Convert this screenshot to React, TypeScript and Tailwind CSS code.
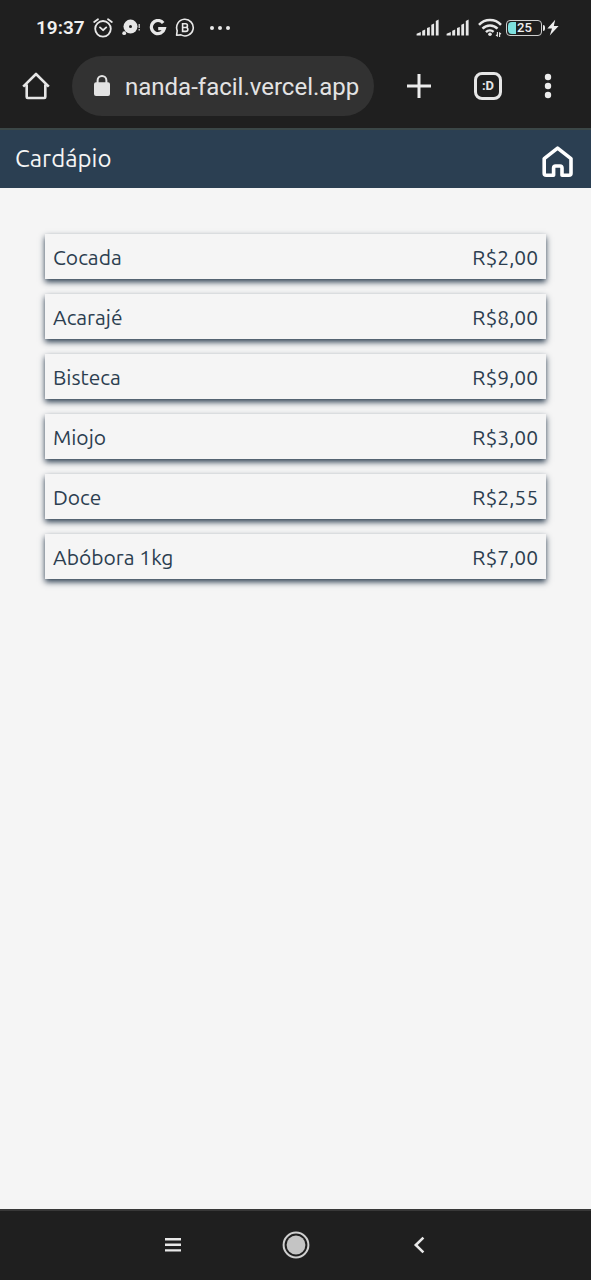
import React from "react";

const items = [
  { name: "Cocada", price: "R$2,00" },
  { name: "Acarajé", price: "R$8,00" },
  { name: "Bisteca", price: "R$9,00" },
  { name: "Miojo", price: "R$3,00" },
  { name: "Doce", price: "R$2,55" },
  { name: "Abóbora 1kg", price: "R$7,00" },
];

function AlarmIcon() {
  return (
    <svg width="20" height="20" viewBox="0 0 20 20" fill="none" stroke="#e8e8e8" strokeWidth="1.8" strokeLinecap="round" strokeLinejoin="round" aria-hidden="true">
      <circle cx="10" cy="10.8" r="7.8" />
      <path d="M1.2 4 5 1.2M18.8 4 15 1.2M7 9.4l3 2.8 3.2-2.8" />
    </svg>
  );
}

function RecordIcon() {
  return (
    <svg width="20" height="20" viewBox="0 0 20 20" fill="#e8e8e8" aria-hidden="true">
      <circle cx="9.5" cy="8.6" r="7" />
      <circle cx="9.5" cy="8.6" r="1.5" fill="#1f1f1f" />
      <circle cx="3.2" cy="15.2" r="1.9" />
      <path d="M17.6 6h1.2v4h-1.2zM17.6 11h1.2v1.4h-1.2z" />
    </svg>
  );
}

function GoogleIcon() {
  return (
    <svg width="18" height="18" viewBox="0 0 18 18" fill="none" stroke="#e8e8e8" strokeWidth="3.2" aria-hidden="true">
      <path d="M14.2 4A6.6 6.6 0 1 0 15.4 9.6H9.2" />
    </svg>
  );
}

function BusinessIcon() {
  return (
    <svg width="20" height="20" viewBox="0 0 20 20" fill="none" stroke="#e8e8e8" aria-hidden="true">
      <path d="M2.2 12.6A8.3 8.3 0 1 1 6 16.9L1.6 17.2Z" strokeWidth="1.6" strokeLinejoin="round" />
      <path d="M7.6 5.8h3a1.8 1.8 0 0 1 0 3.7h-3Zm0 3.7h3.3a1.9 1.9 0 0 1 0 3.9H7.6Z" strokeWidth="1.6" />
    </svg>
  );
}

function SignalIcon() {
  return (
    <svg width="24" height="18" viewBox="0 0 24 18" fill="#e8e8e8" aria-hidden="true">
      <path d="M.6 14.7 4.8 13v3.4H.6zM6.2 11.8l3-1.2v5.8h-3zM11 9l2.8-1.1v8.5H11zM15.3 5.8l2.8-1.2v11.8h-2.8zM19.8 2l2.8-1.4v15.8h-2.8z" />
    </svg>
  );
}

function WifiIcon() {
  return (
    <svg width="24" height="20" viewBox="0 0 24 20" fill="none" stroke="#e8e8e8" strokeWidth="2.5" aria-hidden="true">
      <path d="M1 6.8a15 15 0 0 1 22 0M4.5 10.7a10.3 10.3 0 0 1 15 0M8 14.1a5.6 5.6 0 0 1 7.6-.2" />
      <circle cx="12" cy="16.2" r="1.8" fill="#e8e8e8" stroke="none" />
      <path d="M19.4 14v4l-1.4-1M21.6 19v-4l1.4 1" strokeWidth="1.1" />
    </svg>
  );
}

function BoltIcon() {
  return (
    <svg width="12" height="18" viewBox="0 0 12 18" fill="#f0f0f0" aria-hidden="true">
      <path d="M8.2.8.4 9.4H5L2.8 16.6 11.6 7H6.8Z" />
    </svg>
  );
}

function StatusBar() {
  return (
    <div className="flex h-14 items-center justify-between pr-8 pb-px pl-9 text-[#f0f0f0]">
      <div className="flex items-center gap-2">
        <span className="text-[19px] leading-6 font-semibold">19:37</span>
        <AlarmIcon />
        <RecordIcon />
        <GoogleIcon />
        <BusinessIcon />
        <svg className="ml-1.5" width="22" height="6" viewBox="0 0 22 6" fill="#e8e8e8" aria-hidden="true">
          <circle cx="3" cy="3" r="2" />
          <circle cx="11" cy="3" r="2" />
          <circle cx="19" cy="3" r="2" />
        </svg>
      </div>
      <div className="flex items-center">
        <div className="mr-2 flex gap-1.5">
          <SignalIcon />
          <SignalIcon />
        </div>
        <WifiIcon />
        <div className="ml-1 flex h-4 w-9 items-center rounded border border-[#cfcfcf] bg-[#1f1f1f]">
          <span className="ml-px h-3 w-2 rounded-l-sm bg-[#7ee0df]" />
          <span className="ml-px text-[13px] leading-3 font-medium">25</span>
        </div>
        <span className="mr-0.5 ml-px h-1.5 w-0.5 rounded-r-sm bg-[#e8e8e8]" />
        <BoltIcon />
      </div>
    </div>
  );
}

function BrowserBar() {
  return (
    <div className="flex items-center pr-[7px] pb-3">
      <button type="button" aria-label="Página inicial" className="flex h-[60px] w-[72px] items-center justify-center">
        <svg width="28" height="28" viewBox="0 0 28 28" fill="none" stroke="#e6e6e6" strokeWidth="2.6" strokeLinejoin="round" aria-hidden="true">
          <path d="M1.2 14.6 14 2l12.8 12.6M4.7 12.6V25a1 1 0 0 0 1 1H22.3a1 1 0 0 0 1-1V12.6" />
        </svg>
      </button>
      <div className="flex h-[60px] min-w-0 flex-1 items-center rounded-full bg-[#323232] pr-3 pl-5">
        <svg className="shrink-0" width="20" height="24" viewBox="0 0 20 24" aria-hidden="true">
          <path d="M5.6 9V6.4a4.4 4.4 0 0 1 8.8 0V9" fill="none" stroke="#e3e3e3" strokeWidth="2" />
          <rect x="2" y="8.2" width="16" height="13.8" rx="2" fill="#e3e3e3" />
        </svg>
        <input
          type="text"
          readOnly
          aria-label="Endereço"
          value="nanda-facil.vercel.app"
          className="ml-[13px] min-w-0 flex-1 bg-transparent pt-0.5 text-[24px] leading-8 text-[#e3e3e3] outline-none"
        />
      </div>
      <button type="button" aria-label="Nova guia" className="flex h-[60px] w-[90px] items-center justify-center">
        <svg width="24" height="24" viewBox="0 0 24 24" stroke="#ececec" strokeWidth="3" aria-hidden="true">
          <path d="M12 0v24M0 12h24" />
        </svg>
      </button>
      <button type="button" aria-label="Guias" className="flex h-[60px] w-12 items-center justify-center">
        <span className="flex size-7 items-center justify-center rounded-lg border-3 border-[#e6e6e6] text-[13px] leading-4 font-bold text-[#e6e6e6]">:D</span>
      </button>
      <button type="button" aria-label="Mais opções" className="flex h-[60px] w-[72px] items-center justify-center">
        <svg width="8" height="26" viewBox="0 0 8 26" fill="#ececec" aria-hidden="true">
          <circle cx="4" cy="4" r="3.2" />
          <circle cx="4" cy="13" r="3.2" />
          <circle cx="4" cy="22" r="3.2" />
        </svg>
      </button>
    </div>
  );
}

export default function App() {
  return (
    <div className="flex min-h-screen flex-col bg-[#f5f5f5] font-['Roboto',sans-serif]">
      <div className="bg-[#1f1f1f]">
        <StatusBar />
        <BrowserBar />
      </div>

      <header className="flex h-[60px] items-center justify-between border-t-2 border-[#3b4747] bg-[#2b3f52] px-[15px] font-['Ubuntu','Noto_Sans',sans-serif]">
        <h1 className="text-[24px] leading-8 text-[#f5f5f5]">Cardápio</h1>
        <a href="#inicio" aria-label="Início" className="pt-1">
          <svg width="36" height="36" viewBox="0 0 36 36" fill="none" stroke="#ffffff" strokeWidth="3.6" strokeLinejoin="round" aria-hidden="true">
            <path d="M4.2 15.6 17.6 5.2l13.4 10.4V30.2a2 2 0 0 1-2 2H22V25a2 2 0 0 0-2-2H15.6a2 2 0 0 0-2 2V32.2H6.2a2 2 0 0 1-2-2Z" />
          </svg>
        </a>
      </header>

      <main className="flex-1 px-[45px] pt-[46px] pb-12 font-['Ubuntu','Noto_Sans',sans-serif]">
        <ul className="flex flex-col gap-[15px]">
          {items.map((item) => (
            <li
              key={item.name}
              className="flex h-[45px] items-center justify-between bg-[#f5f5f5] px-2 text-[21px] leading-7 text-[#2c3e50] shadow-[0_3px_6px_#2c3e50]"
            >
              <span>{item.name}</span>
              <span>{item.price}</span>
            </li>
          ))}
        </ul>
      </main>

      <nav aria-label="Navegação do sistema" className="flex h-[71px] items-center justify-center border-t-2 border-[#383838] bg-[#1f1f1f] pb-0.5">
        <button type="button" aria-label="Recentes" className="flex h-full w-[123px] items-center justify-center">
          <svg width="18" height="16" viewBox="0 0 18 16" stroke="#e8e8e8" strokeWidth="2.4" aria-hidden="true">
            <path d="M1 2.2h16M1 7.8h16M1 13.4h16" />
          </svg>
        </button>
        <button type="button" aria-label="Início do sistema" className="flex h-full w-[123px] items-center justify-center">
          <svg width="28" height="28" viewBox="0 0 28 28" aria-hidden="true">
            <circle cx="14" cy="14" r="12.4" fill="none" stroke="#d0d0d0" strokeWidth="2" />
            <circle cx="14" cy="14" r="9.4" fill="#c4c4c4" />
          </svg>
        </button>
        <button type="button" aria-label="Voltar" className="flex h-full w-[123px] items-center justify-center">
          <svg width="12" height="18" viewBox="0 0 12 18" fill="none" stroke="#e8e8e8" strokeWidth="2.6" aria-hidden="true">
            <path d="M10.4 1.6 2.8 9l7.6 7.4" />
          </svg>
        </button>
      </nav>
    </div>
  );
}
